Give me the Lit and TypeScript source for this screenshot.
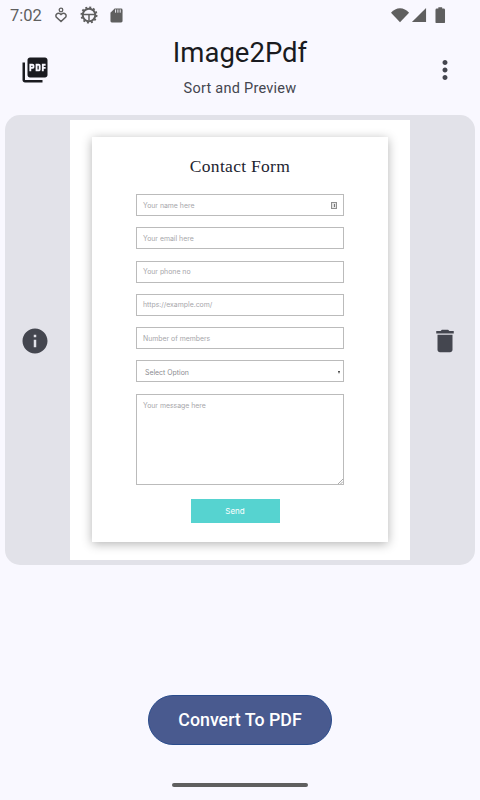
import { LitElement, html, css } from "lit";
import { customElement } from "lit/decorators.js";

const PDF = "M20 2H8c-1.1 0-2 .9-2 2v12c0 1.1.9 2 2 2h12c1.1 0 2-.9 2-2V4c0-1.1-.9-2-2-2zm-8.5 7.5c0 .83-.67 1.5-1.5 1.5H9v2H7.5V7H10c.83 0 1.5.67 1.5 1.5v1zm5 2c0 .83-.67 1.5-1.5 1.5h-2.5V7H15c.83 0 1.5.67 1.5 1.5v3zm4-3H19v1h1.5V11H19v2h-1.5V7h3v1.5zM9 9.5h1v-1H9v1zM4 6H2v14c0 1.1.9 2 2 2h14v-2H4V6zm10 5.5h1v-3h-1v3z";
const MORE = "M12 8c1.1 0 2-.9 2-2s-.9-2-2-2-2 .9-2 2 .9 2 2 2zm0 2c-1.1 0-2 .9-2 2s.9 2 2 2 2-.9 2-2-.9-2-2-2zm0 6c-1.1 0-2 .9-2 2s.9 2 2 2 2-.9 2-2-.9-2-2-2z";
const INFO = "M12 2C6.48 2 2 6.48 2 12s4.48 10 10 10 10-4.48 10-10S17.52 2 12 2zm1 15h-2v-6h2v6zm0-8h-2V7h2v2z";
const TRASH = "M6 19c0 1.1.9 2 2 2h8c1.1 0 2-.9 2-2V7H6v12zM19 4h-3.5l-1-1h-5l-1 1H5v2h14V4z";

const icon = (d: string) => html`<svg class="ic" viewBox="0 0 24 24"><path d=${d}></path></svg>`;

@customElement("app-root")
export class AppRoot extends LitElement {
  static styles = css`
    :host { display: flex; flex-direction: column; width: 480px; height: 800px; background: #f9f8ff; font-family: Roboto, sans-serif; overflow: hidden; }
    .status { height: 30px; flex: none; display: flex; align-items: center; padding: 0 34.500px 0 10px; color: #5f5f5f; font-size: 16.500px; }
    .status .time { width: 45px; padding-top: 1px; }
    .status svg { display: block; fill: #5f5f5f; flex: none; }
    .gear { margin-left: 13px; }
    .sd { margin-left: 11.500px; }
    .signal { margin-left: 1px; }
    .battery { margin-left: 8px; }
    .spacer { flex: 1; }
    .header { height: 85px; flex: none; display: grid; grid-template-columns: 70px 1fr 70px; align-items: center; }
    .ic { width: 30px; height: 30px; display: block; fill: #44464f; }
    .header .lead { justify-self: center; margin-top: -5px; }
    .header .lead .ic { fill: #1a1b20; }
    .header .trail { justify-self: center; margin-top: -5px; }
    .titles { text-align: center; color: #1a1b20; }
    .title { font-size: 27.500px; line-height: 36px; margin-top: -11px; }
    .sub { font-size: 14.500px; line-height: 20px; margin-top: 8px; letter-spacing: 0.25px; color: #44464f; }
    .card { margin: 0 5px; height: 450px; flex: none; background: #e2e2e9; border-radius: 15px; display: grid; grid-template-columns: 65px 340px 65px; align-items: center; }
    .side-l { margin: 1px 0 0 15px; }
    .side-r { margin: 1px 0 0 20px; }
    .shot { width: 340px; height: 440px; background: #fff; box-sizing: border-box; padding: 17px 22px 18px; }
    .paper { height: 405px; background: #fff; box-shadow: 0 2px 10px rgba(0,0,0,.3); box-sizing: border-box; display: flex; flex-direction: column; align-items: center; }
    .form-title { font-family: "Liberation Serif", serif; font-size: 17.500px; line-height: 22px; margin-top: 18px; color: #1d2430; letter-spacing: 0.3px; }
    .fields { margin-top: 17px; width: 208px; display: flex; flex-direction: column; gap: 11.300px; }
    .field { height: 22px; flex: none; box-sizing: border-box; border: 1px solid #bbb; display: flex; align-items: center; justify-content: space-between; padding: 0 6px; font-family: Inter, sans-serif; font-size: 6.900px; color: #a6a6aa; }
    .field.sel { padding: 2px 3px 0 8px; color: #8c8c90; }
    .field.area { height: 91px; align-items: flex-start; padding-top: 6px; position: relative; }
    .grip { position: absolute; right: 0; bottom: 0; width: 6px; height: 6px; }
    .key { width: 6px; height: 7px; border: 1px solid #8f8f8f; background: #e4e4e4; box-sizing: border-box; display: flex; justify-content: center; }
    .key::before { content: ""; width: 1px; height: 3px; margin-top: 1px; background: #777; }
    .arrow { width: 0; height: 0; border-left: 1.500px solid transparent; border-right: 1.500px solid transparent; border-top: 3px solid #333; }
    .send { margin: 14.200px 0 0 -10px; width: 89px; height: 24px; background: #56d3d0; color: #fff; font-family: Inter, sans-serif; font-size: 8px; display: flex; align-items: center; justify-content: center; }
    .bottom { flex: 1; display: flex; flex-direction: column; align-items: center; justify-content: flex-end; }
    .cta { width: 184px; height: 50px; box-sizing: border-box; border-radius: 25px; background: #495a8f; border: 1px solid #2a4c8c; color: #fff; font-family: Roboto, sans-serif; font-weight: 500; font-size: 17.800px; padding-bottom: 1px; display: flex; align-items: center; justify-content: center; }
    .home { margin: 38px 0 13px; width: 136px; height: 4px; border-radius: 2px; background: #5f5f5f; }
  `;

  render() {
    return html`
      <div class="status">
        <span class="time">7:02</span>
        <svg width="12" height="16" viewBox="0 0 12 16"><circle cx="6" cy="3" r="1.800" fill="none" stroke="#5f5f5f" stroke-width="1.300"></circle><path d="M6 14.500 1.200 10a2.600 2.600 0 0 1 3.400-3.500L6 7.600l1.400-1.100A2.600 2.600 0 0 1 10.800 10z" fill="none" stroke="#5f5f5f" stroke-width="1.500"></path></svg>
        <svg class="gear" width="18" height="18" viewBox="0 0 18 18"><circle cx="9" cy="9" r="6.300" fill="none" stroke="#5f5f5f" stroke-width="2"></circle><circle cx="9" cy="9" r="7.600" fill="none" stroke="#5f5f5f" stroke-width="1.800" stroke-dasharray="2 1.980"></circle><path d="M3 8.500h12M9 8.500v6" stroke="#5f5f5f" stroke-width="1.500"></path></svg>
        <svg class="sd" width="13" height="16" viewBox="0 0 14 16"><path d="M5 1h7a1.500 1.500 0 0 1 1.500 1.500v12A1.500 1.500 0 0 1 12 16H2a1.500 1.500 0 0 1-1.500-1.500V5.500z"></path><path d="M6 2v3.500M8.500 2v3.500M11 2v3.500" stroke="#f9f8ff" stroke-width="1"></path></svg>
        <div class="spacer"></div>
        <svg width="19" height="16" viewBox="0 0 20 16"><path d="M0 5.500C2.700 2.800 6 1 9.500 1S16.300 2.800 19 5.500L9.500 15.500z"></path></svg>
        <svg class="signal" width="16" height="16" viewBox="0 0 17 16"><path d="M16 .5V15.500H1z"></path></svg>
        <svg class="battery" width="10.500" height="16.500" viewBox="0 0 11 17"><path d="M3.500 0h4v1.500h1.500a1.500 1.500 0 0 1 1.500 1.500v12.500a1.500 1.500 0 0 1-1.500 1.500H2a1.500 1.500 0 0 1-1.500-1.500V3A1.500 1.500 0 0 1 2 1.500h1.500z"></path></svg>
      </div>
      <div class="header">
        <div class="lead">${icon(PDF)}</div>
        <div class="titles">
          <div class="title">Image2Pdf</div>
          <div class="sub">Sort and Preview</div>
        </div>
        <div class="trail">${icon(MORE)}</div>
      </div>
      <div class="card">
        <div class="side-l">${icon(INFO)}</div>
        <div class="shot">
          <div class="paper">
            <div class="form-title">Contact Form</div>
            <div class="fields">
              <div class="field">Your name here<span class="key"></span></div>
              <div class="field">Your email here</div>
              <div class="field">Your phone no</div>
              <div class="field">https://example.com/</div>
              <div class="field">Number of members</div>
              <div class="field sel">Select Option<span class="arrow"></span></div>
              <div class="field area">Your message here
                <svg class="grip" viewBox="0 0 6 6"><path d="M1 6 6 1M3.500 6 6 3.500" stroke="#888" stroke-width=".7"></path></svg>
              </div>
            </div>
            <div class="send">Send</div>
          </div>
        </div>
        <div class="side-r">${icon(TRASH)}</div>
      </div>
      <div class="bottom">
        <div class="cta">Convert To PDF</div>
        <div class="home"></div>
      </div>
    `;
  }
}
